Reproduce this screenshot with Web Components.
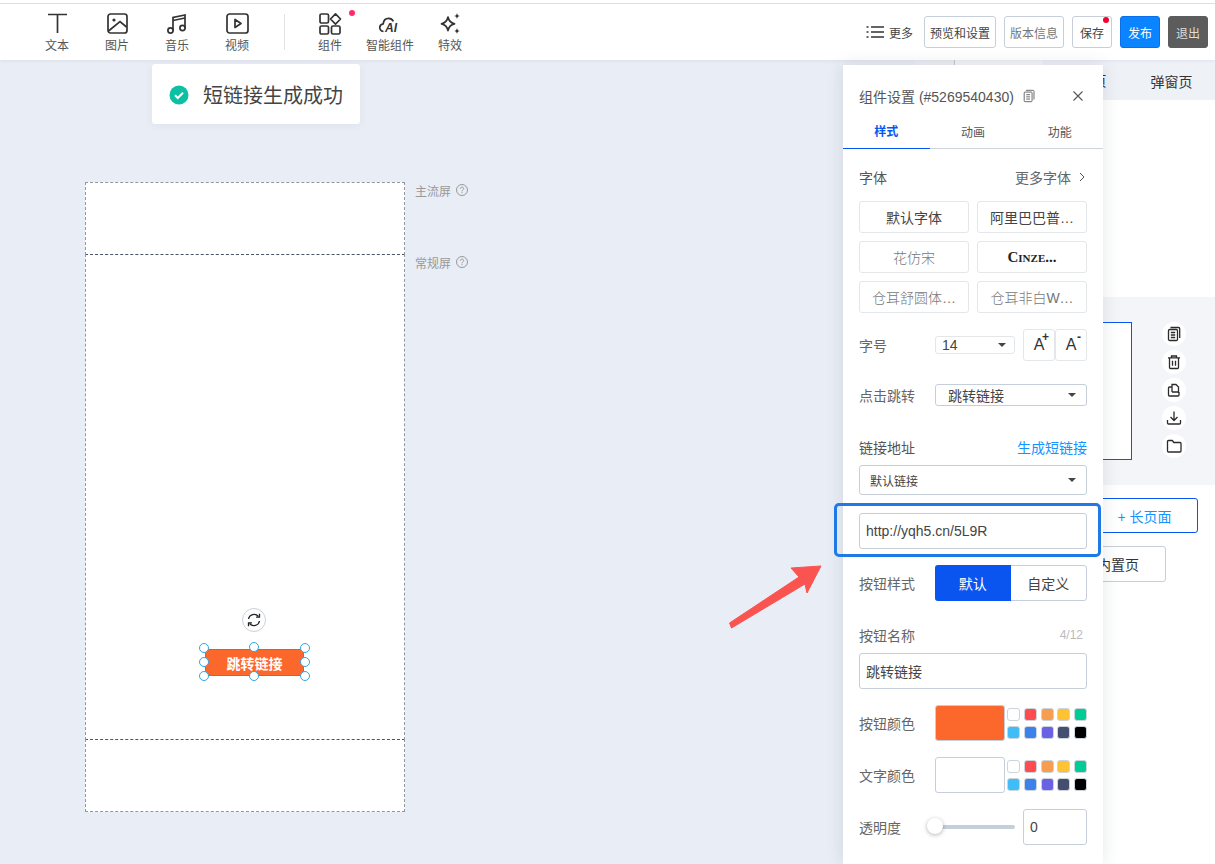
<!DOCTYPE html>
<html lang="zh">
<head>
<meta charset="utf-8">
<title>组件设置</title>
<style>
  html, body { margin: 0; height: 100%; }
  body {
    font-family: "Liberation Sans", "Noto Sans CJK SC", sans-serif;
    color: #444;
    overflow: hidden;
  }
</style>
</head>
<body>
<editor-page></editor-page>

<script>
// helper: every element gets its own shadow root with its own markup
function shadow(el, html) {
  el.attachShadow({ mode: "open" }).innerHTML = html;
}

const ICONS = {
  text: `<path d="M3 2.5h19M12.5 2.5V21" />`,
  image: `<rect x="3" y="2" width="19" height="19" rx="2.5"/><circle cx="9" cy="8" r="1.6" fill="#333" stroke="none"/><path d="M3.5 19 15 9.5l6.5 5.5"/>`,
  music: `<path d="M8 18.5V5.5l12-2.500V16"/><circle cx="5.500" cy="18.500" r="2.600"/><circle cx="17.500" cy="16" r="2.600"/><path d="M8 8.500l12-2.500"/>`,
  video: `<rect x="2" y="2" width="21" height="19" rx="2.500"/><path d="M10 7.500v8l6-4z" stroke-linejoin="round"/>`,
  parts: `<rect x="2" y="2" width="8.500" height="9" rx="1.500"/><path d="M17.500 1.800 22.500 7l-5 5.200L12.500 7z" stroke-linejoin="round"/><rect x="2" y="14" width="8.500" height="8" rx="1.500"/><rect x="13.500" y="14" width="8.500" height="8" rx="1.500"/>`,
  ai: `<path d="M5.500 19.500C2.500 19 1.500 16.800 1.800 15c.3-1.800 1.700-3 3.400-3.200C5.600 8.300 8 6.300 10.500 6.300c2.300 0 4 1.200 4.900 3" /><text x="7" y="19.500" font-family="Liberation Sans" font-size="12" font-weight="700" font-style="italic" fill="#333" stroke="none">AI</text>`,
  spark: `<path d="M10 5c.8 4.200 2.300 5.800 6.500 6.800-4.200 1-5.700 2.600-6.500 6.800-.8-4.200-2.300-5.800-6.500-6.800C7.700 10.800 9.200 9.200 10 5z" stroke-linejoin="round"/><path d="M19 1c.4 2 1 2.600 3 3-2 .4-2.600 1-3 3-.4-2-1-2.600-3-3 2-.4 2.600-1 3-3zM19 16c.4 2 1 2.600 3 3-2 .4-2.600 1-3 3-.4-2-1-2.600-3-3 2-.4 2.600-1 3-3z" fill="#333" stroke="none"/>`,
  copy: `<rect x="2.500" y="3.500" width="9" height="11" rx="1.200"/><path d="M4.500 1.500h8a1.200 1.200 0 0 1 1.200 1.200v9.300M4.800 6.500h4.400M4.800 9h4.400M4.800 11.500h4.400"/>`,
  trash: `<path d="M2 3.800h12M5.500 3.500V2h5v1.500M3.500 4v9.500a1 1 0 0 0 1 1h7a1 1 0 0 0 1-1V4M6.500 6.800v5M9.500 6.800v5"/>`,
  clone: `<path d="M6 10V2.500h4l2.500 2.500v6M6 10h6.500"/><path d="M6 5H3.500a1 1 0 0 0-1 1v7a1 1 0 0 0 1 1h8.500a1 1 0 0 0 1-1V10"/>`,
  save: `<path d="M8 1.500v8.500M4.500 7l3.500 3.500L11.500 7M1.500 10v3a1 1 0 0 0 1 1h11a1 1 0 0 0 1-1v-3"/>`,
  folder: `<path d="M1.500 3.500a1 1 0 0 1 1-1h3.800l1.500 2h6.200a1 1 0 0 1 1 1V13a1 1 0 0 1-1 1h-11.500a1 1 0 0 1-1-1z" stroke-linejoin="round"/>`
};

class ToolItem extends HTMLElement {
  constructor() {
    super();
    const dot = this.hasAttribute("dot") ? `<i></i>` : "";
    shadow(this, `
      <style>
        :host { display: flex; flex-direction: column; align-items: center; width: 60px; padding-top: 8px; position: relative; box-sizing: border-box; }
        svg { width: 24px; height: 24px; fill: none; stroke: #333; stroke-width: 1.700; display: block; }
        span { font-size: 12px; line-height: 16px; margin-top: 2px; color: #555; white-space: nowrap; }
        i { position: absolute; left: 49px; top: 6px; width: 6px; height: 6px; border-radius: 50%; background: #ff2a68; }
      </style>
      <svg viewBox="0 0 24 24">${ICONS[this.getAttribute("icon")]}</svg>
      <span><slot></slot></span>${dot}`);
  }
}
customElements.define("tool-item", ToolItem);

class TopButton extends HTMLElement {
  constructor() {
    super();
    shadow(this, `
      <style>
        :host { display: flex; align-items: center; justify-content: center; position: relative; height: 32px; box-sizing: border-box; border: 1px solid #c6cfd9; border-radius: 3px; background: #fff; color: #444; font-size: 12px; white-space: nowrap; }
        :host([kind=muted]) { color: #777; }
        :host([kind=blue]) { background: #0a84ff; border-color: #0a6fe8; color: #fff; }
        :host([kind=dark]) { background: #5c5c5c; border-color: #5c5c5c; color: #ddd; }
        i { position: absolute; right: 2px; top: 0; width: 6px; height: 6px; border-radius: 50%; background: #f5002d; }
      </style>
      <slot></slot>${this.hasAttribute("dot") ? "<i></i>" : ""}`);
  }
}
customElements.define("top-button", TopButton);

class AppToolbar extends HTMLElement {
  constructor() {
    super();
    shadow(this, `
      <style>
        :host { display: block; height: 60px; background: #fff; position: relative; z-index: 2; box-shadow: 0 1px 3px rgba(60,70,90,.08); }
        .strip { height: 3px; border-bottom: 1px solid #dedede; }
        .bar { display: flex; height: 56px; padding-left: 27px; }
        .sep { width: 1px; height: 36px; background: #e3e3e3; margin: 10px 15px 0 17px; }
        .right { margin-left: auto; display: flex; align-items: flex-start; padding: 12px 7px 0 0; }
        .more { display: flex; align-items: center; height: 32px; margin-right: 11px; font-size: 12px; color: #444; }
        .more svg { width: 18px; height: 14px; margin-right: 5px; }
        top-button.b1 { width: 72px; margin-right: 8px; }
        top-button.b2 { width: 60px; margin-right: 8px; }
        top-button.b3 { width: 40px; margin-right: 8px; }
        top-button.b4 { width: 40px; }
      </style>
      <div class="strip"></div>
      <div class="bar">
        <tool-item icon="text">文本</tool-item>
        <tool-item icon="image">图片</tool-item>
        <tool-item icon="music">音乐</tool-item>
        <tool-item icon="video">视频</tool-item>
        <div class="sep"></div>
        <tool-item icon="parts" dot>组件</tool-item>
        <tool-item icon="ai">智能组件</tool-item>
        <tool-item icon="spark">特效</tool-item>
        <div class="right">
          <div class="more">
            <svg viewBox="0 0 18 14" fill="none" stroke="#333" stroke-width="1.500"><path d="M5 2h13M5 7h13M5 12h13M.500 2h2M.500 7h2M.500 12h2"/></svg>
            更多
          </div>
          <top-button class="b1">预览和设置</top-button>
          <top-button class="b2" kind="muted">版本信息</top-button>
          <top-button class="b3" dot>保存</top-button>
          <top-button class="b3" kind="blue">发布</top-button>
          <top-button class="b4" kind="dark">退出</top-button>
        </div>
      </div>`);
  }
}
customElements.define("app-toolbar", AppToolbar);

class ToastMessage extends HTMLElement {
  constructor() {
    super();
    shadow(this, `
      <style>
        :host { position: absolute; left: 152px; top: 64px; width: 208px; height: 60px; box-sizing: border-box; z-index: 3; display: flex; align-items: center; padding: 1px 0 0 17px; background: #fff; border-radius: 3px; box-shadow: 0 2px 8px rgba(60,70,90,.06); font-size: 20px; color: #444; white-space: nowrap; }
        svg { width: 20px; height: 20px; margin-right: 14px; flex: none; }
      </style>
      <svg viewBox="0 0 20 20"><circle cx="10" cy="10" r="9.500" fill="#0cc0a3"/><path d="M6 10.300l2.800 2.700L14 7.800" fill="none" stroke="#fff" stroke-width="2"/></svg>
      <slot></slot>`);
  }
}
customElements.define("toast-message", ToastMessage);

class ScreenBand extends HTMLElement {
  constructor() {
    super();
    const label = this.getAttribute("label");
    shadow(this, `
      <style>
        :host { display: block; position: relative; box-sizing: border-box; background: #fff; border: 1px dashed #8f97a3; }
        :host([divided]) { border-top-color: #4b5568; }
        .tag { position: absolute; left: 100%; top: -1px; margin-left: 11px; display: flex; align-items: center; height: 16px; font-size: 12px; color: #999; white-space: nowrap; }
        .tag svg { width: 12px; height: 12px; margin-left: 5px; }
      </style>
      <slot></slot>
      ${label ? `<div class="tag">${label}<svg viewBox="0 0 12 12" fill="none" stroke="#999"><circle cx="6" cy="6" r="5.500"/><path d="M4.300 4.700C4.400 3.700 5 3.200 6 3.200c1 0 1.700.6 1.700 1.400 0 1.300-1.700 1.300-1.700 2.700M6 8.200v1"/></svg></div>` : ""}`);
  }
}
customElements.define("screen-band", ScreenBand);

class SelectedButton extends HTMLElement {
  constructor() {
    super();
    const spots = [[-1, -1], [49, -2], [100, -1], [-1, 13], [100, 13], [-1, 27], [49, 27], [100, 27]];
    const dots = spots.map(([x, y]) => `<i style="left:${x - 5}px;top:${y - 5}px"></i>`).join("");
    shadow(this, `
      <style>
        :host { position: absolute; left: 119px; top: 394px; width: 99px; height: 27px; box-sizing: border-box; display: flex; align-items: center; justify-content: center; background: #fc672c; border: 1px solid #1d9be0; border-radius: 2px; color: #fff; font-size: 14px; font-weight: 700; white-space: nowrap; }
        .wrap { position: absolute; left: -1px; top: -1px; }
        i { position: absolute; width: 8px; height: 8px; border: 1px solid #2ea6e6; border-radius: 50%; background: #fff; }
        .rotate { position: absolute; left: 36px; top: -42px; width: 24px; height: 24px; box-sizing: border-box; border: 1px solid #c9d1d9; border-radius: 50%; background: #fff; display: flex; align-items: center; justify-content: center; }
        .rotate svg { width: 16px; height: 16px; }
      </style>
      <slot></slot>
      <div class="wrap">${dots}</div>
      <div class="rotate"><svg viewBox="0 0 16 16" fill="none" stroke="#222" stroke-width="1.300"><path d="M2.500 7A5.600 5.600 0 0 1 12.400 4.500M13.500 9a5.600 5.600 0 0 1-9.900 2.500"/><path d="M13.500 1.800v3.400h-3.400M2.500 14.200v-3.400h3.400"/></svg></div>`);
  }
}
customElements.define("selected-button", SelectedButton);

class PhoneStage extends HTMLElement {
  constructor() {
    super();
    shadow(this, `
      <style>
        :host { display: block; flex: none; width: 915px; box-sizing: border-box; padding: 122px 0 0 85px; background: #e9edf5; }
        .phone { width: 320px; }
        .top { height: 73px; }
        .mid { height: 486px; margin-top: -1px; position: relative; }
        .foot { height: 73px; margin-top: -1px; }
      </style>
      <div class="phone">
        <screen-band class="top" label="主流屏"></screen-band>
        <screen-band class="mid" label="常规屏" divided><selected-button>跳转链接</selected-button></screen-band>
        <screen-band class="foot" divided></screen-band>
      </div>`);
  }
}
customElements.define("phone-stage", PhoneStage);

class PageSidebar extends HTMLElement {
  constructor() {
    super();
    const tools = ["copy", "trash", "clone", "save", "folder"].map(n =>
      `<b><svg viewBox="0 0 16 16">${ICONS[n]}</svg></b>`).join("");
    shadow(this, `
      <style>
        :host { display: flex; flex: none; width: 300px; background: #fff; font-size: 14px; color: #333; }
        .rail { width: 39px; background: #eef0f4; border-right: 1px solid #c4c8ce; }
        .main { width: 260px; display: flex; flex-direction: column; }
        .tabs { display: flex; height: 40px; background: #eef1f6; }
        .tabs div { width: 87px; display: flex; align-items: center; justify-content: center; }
        .tabs .on { background: #f4f6f9; }
        .tabs div:last-child { margin-left: -1px; padding-top: 1px; }
        .page { margin-top: 197px; height: 188px; box-sizing: border-box; background: #f3f5f8; display: flex; padding-top: 25px; }
        .thumb { margin-left: 37px; width: 140px; height: 138px; box-sizing: border-box; background: #fff; border: 1px solid #0a55f0; }
        .tools { margin-left: 30px; width: 24px; margin-top: 0; display: flex; flex-direction: column; gap: 4px; }
        b { display: flex; width: 24px; height: 24px; border-radius: 50%; background: #fff; align-items: center; justify-content: center; }
        b svg { width: 16px; height: 16px; fill: none; stroke: #2b2b2b; stroke-width: 1.300; }
        .add { margin: 13px 0 0 136px; width: 107px; height: 35px; box-sizing: border-box; display: flex; align-items: center; justify-content: center; border: 1px solid #0a55f0; border-radius: 3px; color: #1593ff; }
        .inner { margin: 13px 0 0 115px; width: 96px; height: 36px; box-sizing: border-box; display: flex; align-items: center; justify-content: center; border: 1px solid #c6cfd9; border-radius: 3px; }
      </style>
      <div class="rail"></div>
      <div class="main">
        <div class="tabs"><div class="on"></div><div>普通页</div><div>弹窗页</div></div>
        <div class="page">
          <div class="thumb"></div>
          <div class="tools">${tools}</div>
        </div>
        <div class="add">+ 长页面</div>
        <div class="inner">内置页</div>
      </div>`);
  }
}
customElements.define("page-sidebar", PageSidebar);

class FieldRow extends HTMLElement {
  constructor() {
    super();
    shadow(this, `
      <style>
        :host { display: flex; align-items: center; font-size: 14px; color: #666; }
        .label { width: 76px; flex: none; white-space: nowrap; }
        .body { flex: 1; display: flex; align-items: center; min-width: 0; }
      </style>
      <div class="label">${this.getAttribute("label")}</div>
      <div class="body"><slot></slot></div>`);
  }
}
customElements.define("field-row", FieldRow);

class PickSelect extends HTMLElement {
  constructor() {
    super();
    shadow(this, `
      <style>
        :host { display: flex; align-items: center; justify-content: space-between; box-sizing: border-box; flex: 1; height: 100%; background: #fff; border: 1px solid #c6cfd9; border-radius: 3px; color: #444; font-size: 14px; padding: 0 10px 0 12px; white-space: nowrap; }
        :host([soft]) { border-color: #e3e7ea; padding: 0 8px 0 6px; }
        :host([small]) { font-size: 12px; padding: 0 10px; }
        i { width: 0; height: 0; border: 4px solid transparent; border-top-color: #444; border-bottom: 0; }
      </style>
      <slot></slot><i></i>`);
  }
}
customElements.define("pick-select", PickSelect);

class ColorField extends HTMLElement {
  constructor() {
    super();
    const colors = ["#fff", "#ff4d4f", "#f79d50", "#ffc233", "#00cc96", "#40bdf7", "#3d82ea", "#6a61e4", "#444f6f", "#000"];
    shadow(this, `
      <style>
        :host { display: block; height: 36px; }
        field-row { height: 36px; }
        .big { width: 70px; height: 36px; box-sizing: border-box; border: 1px solid #c6cfd9; border-radius: 3px; background: ${this.getAttribute("value")}; flex: none; }
        .grid { margin-left: 2px; flex: 1; display: grid; grid-template-columns: repeat(5, 13px); justify-content: space-between; row-gap: 5px; align-content: center; height: 100%; }
        .grid i { height: 13px; box-sizing: border-box; border: 1px solid #ccd4dc; border-radius: 3px; }
      </style>
      <field-row label="${this.getAttribute("label")}">
        <div class="big"></div>
        <div class="grid">${colors.map(c => `<i style="background:${c}"></i>`).join("")}</div>
      </field-row>`);
  }
}
customElements.define("color-field", ColorField);

class SettingsPanel extends HTMLElement {
  constructor() {
    super();
    const chips = [
      ["默认字体", ""], ["阿里巴巴普…", ""],
      ["花仿宋", "light"], ["Cinze...", "cinz"],
      ["仓耳舒圆体…", "light"], ["仓耳非白W…", "light"]
    ].map(([t, c]) => `<div class="chip ${c}">${t}</div>`).join("");
    shadow(this, `
      <style>
        :host { position: absolute; left: 843px; top: 65px; bottom: 0; width: 260px; z-index: 4; background: #fff; box-shadow: 0 0 16px rgba(50,60,80,.13); font-size: 14px; color: #555; }
        .head { height: 48px; box-sizing: border-box; padding: 14px 16px 0; display: flex; align-items: center; font-size: 14px; color: #555; white-space: nowrap; padding-bottom: 0; }
        .head .copy { width: 14px; height: 14px; margin-left: 8px; fill: none; stroke: #666; stroke-width: 1.100; }
        .head .close { margin-left: auto; margin-right: 4px; width: 10px; height: 10px; stroke: #555; stroke-width: 1.100; }
        .tabs { display: flex; height: 36px; box-sizing: border-box; border-bottom: 1px solid #ccd5db; font-size: 12px; color: #555; }
        .tabs div { flex: 1; display: flex; align-items: center; justify-content: center; margin-bottom: -1px; }
        .tabs .on { color: #0a55f0; font-weight: 700; border-bottom: 1px solid #0a55f0; }
        .body { padding: 0 16px; }
        .line { display: flex; align-items: center; justify-content: space-between; height: 20px; white-space: nowrap; }
        .line .more { color: #666; display: flex; align-items: center; }
        .line .more svg { width: 6px; height: 10px; margin-left: 8px; margin-right: 2px; fill: none; stroke: #555; }
        .link { color: #1593ff; }
        .fonts { display: grid; grid-template-columns: 110px 110px; column-gap: 8px; row-gap: 8px; margin-top: 14px; }
        .chip { height: 32px; box-sizing: border-box; border: 1px solid #e3e7ea; border-radius: 3px; display: flex; align-items: center; justify-content: center; color: #444; white-space: nowrap; }
        .chip.light { color: #777; font-weight: 300; }
        .chip.cinz { font-family: "Liberation Serif", serif; font-variant: small-caps; font-weight: 700; font-size: 15px; color: #222; }
        .size { margin-top: 16px; height: 32px; }
        .size pick-select { flex: none; width: 80px; }
        .ab { width: 32px; height: 32px; box-sizing: border-box; border: 1px solid #e3e7ea; border-radius: 3px; display: flex; align-items: center; justify-content: center; font-size: 16px; color: #333; position: relative; }
        .ab sup { position: absolute; right: 5px; top: 1px; font-size: 12px; line-height: 12px; font-weight: 700; }
        .a1 { margin-left: 8px; }
        .jump { margin-top: 16px; height: 36px; }
        .addr { margin-top: 24px; }
        .lnk { margin-top: 8px; height: 30px; display: flex; }
        .box { box-sizing: border-box; height: 36px; border: 1px solid #c6cfd9; border-radius: 3px; display: flex; align-items: center; padding: 0 6px; color: #444; font-size: 14px; background: #fff; }
        .url { margin-top: 18px; }
        .kind { margin-top: 16px; height: 36px; }
        .seg { flex: 1; height: 36px; display: flex; box-sizing: border-box; border: 1px solid #c6cfd9; border-radius: 3px; color: #444; }
        .seg div { flex: 1; display: flex; align-items: center; justify-content: center; }
        .seg .on { background: #0a55f0; color: #fff; margin: -1px 0 -1px -1px; border-radius: 3px 0 0 3px; }
        .name { margin-top: 24px; color: #666; }
        .name small { font-size: 12px; color: #bbb; margin-right: 4px; }
        .nbox { margin-top: 8px; }
        color-field { margin-top: 16px; }
        .alpha { margin-top: 16px; height: 36px; }
        .slider { width: 80px; height: 4px; background: #c6cfd9; border-radius: 2px; position: relative; flex: none; margin-right: 8px; }
        .slider i { position: absolute; left: -8px; top: -7px; width: 16px; height: 16px; border-radius: 50%; background: #fff; box-shadow: 0 1px 4px rgba(0,0,0,.3); }
        .alpha .box { flex: 1; padding: 0 6px; }
      </style>
      <div class="head">
        组件设置 (#5269540430)
        <svg class="copy" viewBox="0 0 16 16"><rect x="2.500" y="3.500" width="9" height="11" rx="1"/><path d="M4.500 1.500h8a1.200 1.200 0 0 1 1.200 1.200v9.300M4.800 6.500h4.400M4.800 9h4.400M4.800 11.500h4.400"/></svg>
        <svg class="close" viewBox="0 0 10 10" fill="none"><path d="M.5.5l9 9M9.500.5l-9 9"/></svg>
      </div>
      <div class="tabs"><div class="on">样式</div><div>动画</div><div>功能</div></div>
      <div class="body">
        <div class="line" style="margin-top:18px">
          <span>字体</span>
          <span class="more">更多字体<svg viewBox="0 0 6 10"><path d="M1 1l4 4-4 4"/></svg></span>
        </div>
        <div class="fonts">${chips}</div>
        <field-row class="size" label="字号">
          <pick-select soft>14</pick-select>
          <div class="ab a1">A<sup>+</sup></div>
          <div class="ab">A<sup>-</sup></div>
        </field-row>
        <field-row class="jump" label="点击跳转"><pick-select>跳转链接</pick-select></field-row>
        <div class="line addr"><span>链接地址</span><span class="link">生成短链接</span></div>
        <div class="lnk"><pick-select small>默认链接</pick-select></div>
        <div class="box url">http://yqh5.cn/5L9R</div>
        <field-row class="kind" label="按钮样式">
          <div class="seg"><div class="on">默认</div><div>自定义</div></div>
        </field-row>
        <div class="line name"><span>按钮名称</span><small>4/12</small></div>
        <div class="box nbox">跳转链接</div>
        <color-field label="按钮颜色" value="#fc672c"></color-field>
        <color-field label="文字颜色" value="#fff"></color-field>
        <field-row class="alpha" label="透明度">
          <div class="slider"><i></i></div>
          <div class="box">0</div>
        </field-row>
      </div>`);
  }
}
customElements.define("settings-panel", SettingsPanel);

// red arrow and blue frame drawn over the screenshot as annotation
class ArrowNote extends HTMLElement {
  constructor() {
    super();
    shadow(this, `
      <style>
        :host { position: absolute; left: 0; top: 0; z-index: 5; display: block; }
        .frame { position: absolute; left: 834px; top: 503px; width: 267px; height: 54px; box-sizing: border-box; border: 3px solid #1f7ae8; border-radius: 5px; }
        svg { position: absolute; left: 720px; top: 555px; width: 110px; height: 80px; }
      </style>
      <div class="frame"></div>
      <svg viewBox="720 555 110 80"><path d="M821 566 791 568 799 577 729.500 623 731.500 628 805 584 807 593z" fill="#fa5450" stroke="#fa5450" stroke-width="1" stroke-linejoin="round"/></svg>`);
  }
}
customElements.define("arrow-note", ArrowNote);

class EditorPage extends HTMLElement {
  constructor() {
    super();
    shadow(this, `
      <style>
        :host { display: flex; flex-direction: column; position: relative; width: 1215px; height: 864px; overflow: hidden; background: #e9edf5; }
        .main { flex: 1; display: flex; min-height: 0; }
      </style>
      <app-toolbar></app-toolbar>
      <div class="main">
        <phone-stage></phone-stage>
        <page-sidebar></page-sidebar>
      </div>
      <toast-message>短链接生成成功</toast-message>
      <settings-panel></settings-panel>
      <arrow-note></arrow-note>`);
  }
}
customElements.define("editor-page", EditorPage);
</script>
</body>
</html>
